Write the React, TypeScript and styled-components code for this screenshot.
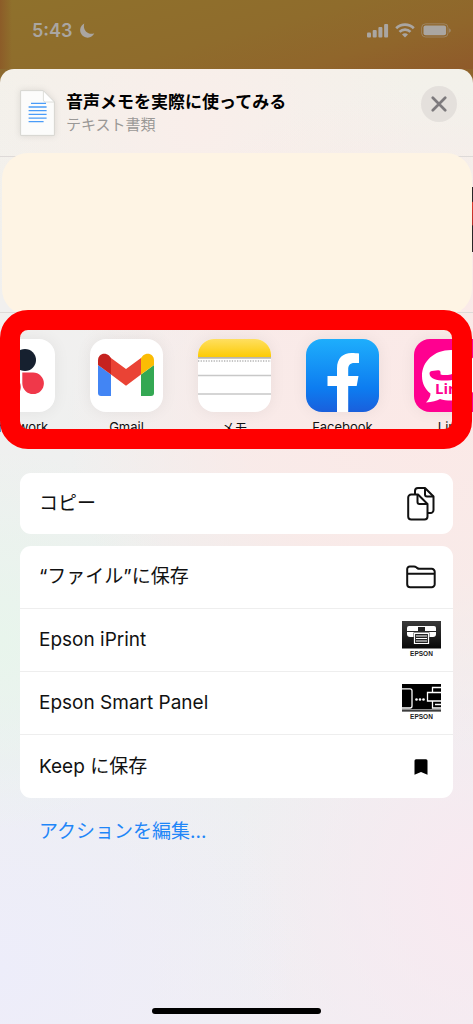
import React from "react";
import styled, { createGlobalStyle } from "styled-components";

const GlobalStyle = createGlobalStyle`
  *, *::before, *::after { box-sizing: border-box; }
  body {
    margin: 0;
    font-family: Inter, "Noto Sans CJK JP", sans-serif;
    color: #111;
  }
  button { font: inherit; color: inherit; border: 0; padding: 0; background: none; cursor: pointer; }
  h1, h2, p, ul { margin: 0; padding: 0; }
  svg { display: block; flex: none; }
`;

const Screen = styled.div`
  min-height: 100vh;
  display: flex;
  flex-direction: column;
  overflow: hidden;
  background: linear-gradient(100deg, #8c6a30 0, #90692c 60%, #8f5a2b 100%);
`;

const StatusBar = styled.header`
  height: 69px;
  padding: 0 22px 8px 32px;
  display: flex;
  align-items: center;
  justify-content: space-between;
  color: #aaa6a2;
  background:
    linear-gradient(90deg, #8c5c28 0, #8c5c2800 12px),
    linear-gradient(165deg, #8f712c 0, #8f6c2c 50%, #90662b 75%, #8f5a2a 100%);
`;

const StatusGroup = styled.div`
  display: flex;
  align-items: center;
  gap: 6px;
`;

const Clock = styled.time`
  font-size: 18px;
  line-height: 24px;
  font-weight: 600;
`;

const Sheet = styled.main`
  flex: 1;
  display: flex;
  flex-direction: column;
  border-radius: 14px 14px 0 0;
  background:
    radial-gradient(ellipse 190px 190px at 0 570px, #e8f5ec 0, #e8f5ec00 100%),
    radial-gradient(ellipse 300px 300px at 0 900px, #ededfa 0, #ededfa00 100%),
    radial-gradient(ellipse 360px 330px at 90% 350px, #fbe9e7 0, #fbe9e7cc 50%, #fbe9e700 100%),
    radial-gradient(ellipse 240px 300px at 100% 820px, #f8e9f0 0, #f8e9f000 100%),
    radial-gradient(ellipse 220px 240px at 42% 60px, #f9eeea 0, #f9eeea00 100%),
    linear-gradient(#f3f1ea 0, #f1f0ef 240px, #ecf0f0 600px, #f1eef3 100%);
`;

const SheetHeader = styled.div`
  height: 88px;
  padding: 17px 16px 0 20px;
  display: flex;
  align-items: flex-start;
  gap: 11px;
  border-bottom: 1px solid #dedad8;
`;

const FileIcon = styled.svg`
  margin-top: 4px;
  overflow: visible;
  filter: drop-shadow(0 0 3px #0000001a);
`;

const FileInfo = styled.div`
  flex: 1;
  padding-top: 4px;
`;

const Title = styled.h1`
  font-size: 17px;
  line-height: 24px;
  font-weight: 700;
  color: #000;
`;

const FileKind = styled.p`
  font-size: 15px;
  line-height: 22px;
  color: #9a9896;
`;

const CloseButton = styled.button`
  width: 36px;
  height: 36px;
  display: grid;
  place-items: center;
  border-radius: 50%;
  background: #e4e0dc;
  color: #7d7a7d;
`;

const Contacts = styled.section`
  position: relative;
  height: 156px;
  padding: 30px 0;
  display: flex;
  justify-content: flex-end;
  border-bottom: 1px solid #dedad8;
`;

const ContactEdge = styled.div`
  width: 2px;
  height: 65px;
  background: linear-gradient(#2b2527 22%, #e0382c 24%, #b5302a 58%, #2b2527 60%);
`;

const Cover = styled.div`
  position: absolute;
  inset: -4px 1px -3px 2px;
  border-radius: 26px;
  background: #fef4e4;
`;

const Apps = styled.section`
  position: relative;
  padding: 26px 0 13px;
`;

const AppList = styled.ul`
  margin-left: -18px;
  display: flex;
  gap: 35px;
  list-style: none;
`;

const AppButton = styled.button`
  width: 73px;
  display: flex;
  flex-direction: column;
  align-items: center;
  gap: 6px;
  font-size: 13px;
  line-height: 18px;
  white-space: nowrap;
`;

const AppTile = styled.span<{ $fill: string }>`
  width: 73px;
  height: 73px;
  border-radius: 16px;
  overflow: hidden;
  background: ${(p) => p.$fill};
  box-shadow: 0 0 16px #00000010;
`;

const Highlight = styled.div`
  position: absolute;
  inset: -3px 1px 0 0;
  border: 20px solid #f00;
  border-radius: 28px;
  pointer-events: none;
`;

const Actions = styled.section`
  padding: 24px 20px 0;
  display: flex;
  flex-direction: column;
  gap: 12px;
`;

const Card = styled.div`
  border-radius: 11px;
  background: #fff;
  overflow: hidden;
`;

const ActionRow = styled.button`
  width: 100%;
  height: 63px;
  padding: 0 12px 0 19px;
  display: flex;
  align-items: center;
  justify-content: space-between;
  font-size: 19px;
  line-height: 28px;
  text-align: left;

  &:only-child { height: 61px; }
  &:not(:last-child) { border-bottom: 1px solid #eeeeee; }
`;

const IconSlot = styled.span`
  width: 40px;
  display: grid;
  place-items: center;
`;

const EditLink = styled.a`
  align-self: flex-start;
  margin: 8px 0 0 19px;
  font-size: 19px;
  line-height: 28px;
  color: #1f86f8;
  text-decoration: none;
`;

const HomeIndicator = styled.div`
  width: 169px;
  height: 6px;
  margin: auto auto 10px;
  border-radius: 3px;
  background: #000;
`;

const Moon = () => (
  <svg width="16" height="16" viewBox="0 0 16 16" aria-hidden="true">
    <path d="M5.300.600A7.400 7.400 0 1 0 15.300 10.300C9.500 12.500 3.200 7.500 5.300.600Z" fill="currentColor" />
  </svg>
);

const Signal = () => (
  <svg width="22" height="15" viewBox="0 0 22 15" fill="currentColor" aria-label="signal">
    <rect x="0" y="9.5" width="4" height="5" rx="1" />
    <rect x="5.7" y="7" width="4" height="7.5" rx="1" />
    <rect x="11.4" y="4" width="4" height="10.5" rx="1" />
    <rect x="17.1" y="1" width="4" height="13.5" rx="1" />
  </svg>
);

const Wifi = () => (
  <svg width="20" height="15" viewBox="0 0 20 15" aria-label="wifi">
    <g fill="none" stroke="currentColor" strokeWidth="2.7">
      <path d="M1.2 5.2A12.6 12.6 0 0 1 18.8 5.2" />
      <path d="M4.5 8.900A7.9 7.9 0 0 1 15.5 8.900" />
    </g>
    <path d="M7 11.6a4.2 4.2 0 0 1 6 0l-3 3Z" fill="currentColor" />
  </svg>
);

const Battery = () => (
  <svg width="30" height="15" viewBox="0 0 30 15" aria-label="battery">
    <rect x=".6" y=".8" width="26.4" height="13.2" rx="4" fill="none" stroke="currentColor" strokeOpacity=".45" />
    <rect x="2.5" y="2.6" width="22.6" height="9.6" rx="2" fill="currentColor" />
    <path d="M28.2 5.3c2 .8 2 3.6 0 4.4Z" fill="currentColor" opacity=".6" />
  </svg>
);

const Document = () => (
  <FileIcon width="35" height="46" viewBox="0 0 35 46" aria-hidden="true">
    <path d="M1 .6h22.4L34.4 12v33.4H.6V.6Z" fill="#fcfcfb" stroke="#d6d5d1" />
    <path d="M23.4.8V10a2 2 0 0 0 2 2h9Z" fill="#fff" stroke="#d6d5d1" strokeWidth=".8" />
    <path
      d="M11 13.4h15M8.6 17h18M8.6 20.7h18M8.6 24.4h18M8.6 28.1h18M8.6 31.6h15"
      stroke="#4a9cf8"
      strokeWidth="1.3"
    />
  </FileIcon>
);

const Cross = () => (
  <svg width="16" height="16" viewBox="0 0 16 16" aria-hidden="true">
    <path d="M1.8 1.8l12.4 12.4M14.2 1.8L1.8 14.2" stroke="currentColor" strokeWidth="2.7" strokeLinecap="round" />
  </svg>
);

const ChatworkArt = () => (
  <svg width="73" height="73" viewBox="0 0 73 73" aria-hidden="true">
    <circle cx="43" cy="21" r="11" fill="#16202f" />
    <path d="M40.300 33.500h10.800a10.800 10.800 0 1 1-10.800 10.800Z" fill="#f0384a" />
    <circle cx="28" cy="48" r="10.800" fill="#f0384a" />
  </svg>
);

const GmailArt = () => (
  <svg width="73" height="73" viewBox="0 0 73 73" aria-hidden="true">
    <path d="M8 26l13 9.5V57H11a3 3 0 0 1-3-3Z" fill="#4285f4" />
    <path d="M64 26l-13 9.5V57h10a3 3 0 0 0 3-3Z" fill="#34a853" />
    <path d="M21 19l15 11 15-11v16.500l-15 11.300L21 35.500Z" fill="#ea4335" />
    <path d="M8 26v-4.500c0-6.500 6.500-8.500 11-5l2 2.500v16.500Z" fill="#c5221f" />
    <path d="M64 26v-4.500c0-6.500-6.500-8.500-11-5l-2 2.500v16.500Z" fill="#fbbc04" />
  </svg>
);

const NotesArt = () => (
  <svg width="73" height="73" viewBox="0 0 73 73" aria-hidden="true">
    <defs>
      <linearGradient id="notes" x2="0" y2="1">
        <stop stopColor="#ffdf60" />
        <stop offset="1" stopColor="#fccb05" />
      </linearGradient>
    </defs>
    <path d="M0 0h73v18H0Z" fill="url(#notes)" />
    <path d="M0 18.800h73" stroke="#b9b6ad" strokeWidth="1.700" />
    <path d="M0 22h73" stroke="#b4b4b4" strokeWidth="1.300" strokeDasharray="1.300 1.300" />
    <path d="M0 36.500h73M0 55h73" stroke="#c8c8c8" strokeWidth="1.500" />
  </svg>
);

const FacebookArt = () => (
  <svg width="73" height="73" viewBox="0 0 73 73" aria-hidden="true">
    <path
      d="M31 73V47H21.500V37H31V29.500C31 19 37 14 45.500 14c3 0 5.500.2 7.500.5V24h-4.500c-4.800 0-6.300 2.500-6.300 6.500V37H52.500l-1.800 10h-8.500v26Z"
      fill="#fff"
    />
  </svg>
);

const LinkusArt = () => (
  <svg width="73" height="73" viewBox="0 0 73 73" aria-hidden="true">
    <path
      d="M37 11C20 11 8 22.500 8 37c0 8 3.500 13.500 8.500 17.500 0 3-1.500 6-4.500 9 6-.5 11-1.500 14-3.500 3.300 1 7 1.500 11 1.500 17 0 29-10.500 29-25S54 11 37 11Z"
      fill="#fff"
    />
    <path
      d="M15.500 34.500c0-1.500 1-2.300 2.500-2.500l6-.8c1.500-.2 2.400.5 2.500 2l.1 2.300c4 1.200 11 .5 15-2l-.5-3 7-3.500 3.500 3c-2 7-9 11-18 11.500-9 .5-18-1-18.100-7Z"
      fill="#ff0090"
    />
    <text x="21" y="55" fontFamily="Open Sans, sans-serif" fontSize="15" fontWeight="700" fill="#ff0090">
      Linkus
    </text>
  </svg>
);

const CopyIcon = () => (
  <svg width="28" height="34" viewBox="0 0 28 34" fill="none" stroke="#111" strokeWidth="2" strokeLinejoin="round" aria-hidden="true">
    <path d="M8 7.500V4a3 3 0 0 1 3-3h7l8.500 8.500V23a3 3 0 0 1-3 3H21" />
    <path d="M18 1v6.500a2 2 0 0 0 2 2h6.500" />
    <path d="M1.200 10.500a3 3 0 0 1 3-3H11l9.500 9.500v12.500a3 3 0 0 1-3 3H4.200a3 3 0 0 1-3-3Z" />
    <path d="M10.500 7.500V15a2 2 0 0 0 2 2h8" />
  </svg>
);

const FolderIcon = () => (
  <svg width="30" height="24" viewBox="0 0 30 24" fill="none" stroke="#111" strokeWidth="2" strokeLinejoin="round" aria-hidden="true">
    <path d="M1.200 4a2.600 2.600 0 0 1 2.600-2.600H8c1 0 1.600.3 2.300.9l1 .8c.6.5 1.200.7 2.200.7h12.200a3 3 0 0 1 3 3v12.400a3 3 0 0 1-3 3H4.200a3 3 0 0 1-3-3Z" />
    <path d="M1.200 8.800h27.500" />
  </svg>
);

const EpsonWord = () => (
  <text x="19.5" y="35" textAnchor="middle" fontFamily="Liberation Sans, sans-serif" fontSize="6.500" fontWeight="700" fill="#222">
    EPSON
  </text>
);

const PrinterIcon = () => (
  <svg width="39" height="38" viewBox="0 0 39 38" aria-hidden="true">
    <defs>
      <linearGradient id="print" x2="0" y2="1">
        <stop stopColor="#3a3a3a" />
        <stop offset="1" stopColor="#080808" />
      </linearGradient>
    </defs>
    <path d="M0 0h39v27.500H0Z" fill="url(#print)" />
    <path d="M5 10V7q0-2 2-2h25q2 0 2 2v3Z" fill="#fff" />
    <path d="M5 11h29v2q0 3-3 3H8q-3 0-3-3Z" fill="#fff" />
    <path d="M16 6h7v4h-7Z" fill="#222" />
    <path d="M11.500 11.500h16V23h-16Z" fill="#222" />
    <path d="M12.500 12.500h14v10h-14Z" fill="#222" stroke="#fff" strokeWidth="1.200" />
    <path d="M14 15h11M14 17.500h11M14 20h11" stroke="#fff" strokeWidth="1.200" />
    <EpsonWord />
  </svg>
);

const PanelIcon = () => (
  <svg width="39" height="38" viewBox="0 0 39 38" aria-hidden="true">
    <path d="M0 0h39v27.500H0Z" />
    <g fill="none" stroke="#fff" strokeWidth="1.300">
      <path d="M0 4.800h8q2 0 2 2V22q0 2-2 2H0" />
      <path d="M39 3.500h-8.500V8.500M39 8.500H25.500V17h5M30.500 17H39M30.500 17v7H39M33 20.500h6" />
      <path d="M0 25.800h39" strokeWidth=".8" />
    </g>
    <g fill="#fff">
      <circle cx="14.500" cy="15.500" r="1.300" />
      <circle cx="18" cy="15.500" r="1.300" />
      <circle cx="21.500" cy="15.500" r="1.300" />
    </g>
    <EpsonWord />
  </svg>
);

const BookmarkIcon = () => (
  <svg width="14" height="16" viewBox="0 0 14 16" aria-hidden="true">
    <path d="M.5 1.800Q.5.200 2 .200h10q1.500 0 1.500 1.600v14L7 13 .5 15.800Z" fill="#000" />
  </svg>
);

const apps = [
  { name: "Chatwork", fill: "#fff", art: <ChatworkArt /> },
  { name: "Gmail", fill: "#fff", art: <GmailArt /> },
  { name: "メモ", fill: "#fff", art: <NotesArt /> },
  { name: "Facebook", fill: "linear-gradient(#1eaefc, #0d7cf0 68%, #1a5fdc)", art: <FacebookArt /> },
  { name: "Link", fill: "#ff0090", art: <LinkusArt /> },
];

const actionGroups = [
  [{ label: "コピー", icon: <CopyIcon /> }],
  [
    { label: "“ファイル”に保存", icon: <FolderIcon /> },
    { label: "Epson iPrint", icon: <PrinterIcon /> },
    { label: "Epson Smart Panel", icon: <PanelIcon /> },
    { label: "Keep に保存", icon: <BookmarkIcon /> },
  ],
];

export default function App() {
  return (
    <Screen lang="ja">
      <GlobalStyle />
      <StatusBar>
        <StatusGroup>
          <Clock>5:43</Clock>
          <Moon />
        </StatusGroup>
        <StatusGroup>
          <Signal />
          <Wifi />
          <Battery />
        </StatusGroup>
      </StatusBar>
      <Sheet>
        <SheetHeader>
          <Document />
          <FileInfo>
            <Title>音声メモを実際に使ってみる</Title>
            <FileKind>テキスト書類</FileKind>
          </FileInfo>
          <CloseButton type="button" aria-label="閉じる">
            <Cross />
          </CloseButton>
        </SheetHeader>
        <Contacts>
          <ContactEdge />
          <Cover />
        </Contacts>
        <Apps>
          <AppList>
            {apps.map((app) => (
              <li key={app.name}>
                <AppButton type="button">
                  <AppTile $fill={app.fill}>{app.art}</AppTile>
                  {app.name}
                </AppButton>
              </li>
            ))}
          </AppList>
          <Highlight />
        </Apps>
        <Actions>
          {actionGroups.map((group) => (
            <Card key={group[0].label}>
              {group.map((action) => (
                <ActionRow type="button" key={action.label}>
                  {action.label}
                  <IconSlot>{action.icon}</IconSlot>
                </ActionRow>
              ))}
            </Card>
          ))}
          <EditLink href="#actions">アクションを編集...</EditLink>
        </Actions>
        <HomeIndicator />
      </Sheet>
    </Screen>
  );
}
